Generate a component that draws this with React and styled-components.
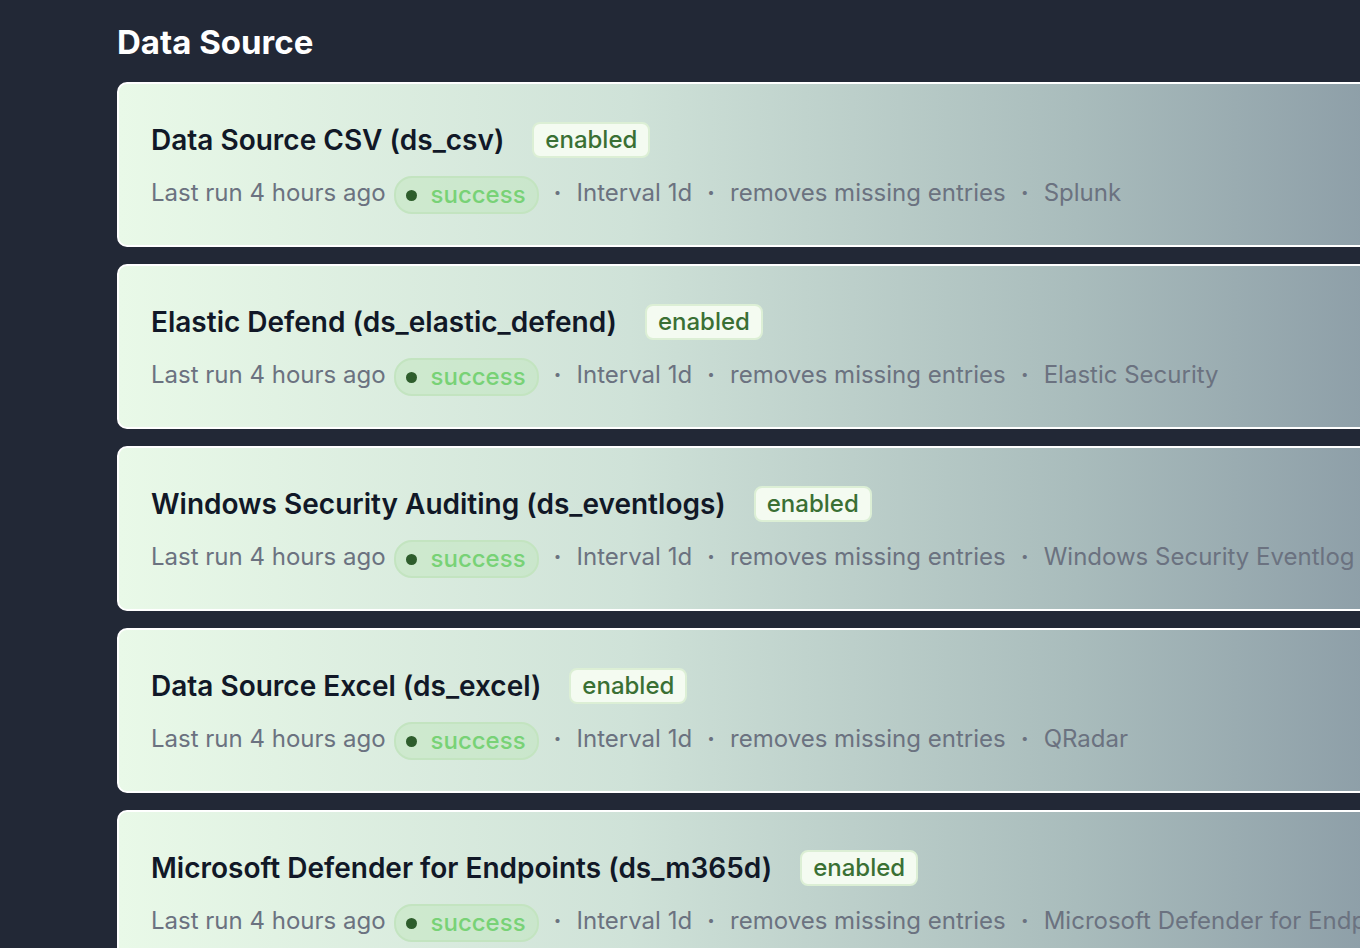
import React from "react";
import styled, { createGlobalStyle } from "styled-components";

const GlobalStyle = createGlobalStyle`
  html, body {
    margin: 0;
    padding: 0;
    background: #222836;
    overflow: hidden;
  }
  body {
    font-family: Inter, "Noto Sans", "Liberation Sans", sans-serif;
  }
`;

const sources = [
  { name: "Data Source CSV (ds_csv)", target: "Splunk" },
  { name: "Elastic Defend (ds_elastic_defend)", target: "Elastic Security" },
  { name: "Windows Security Auditing (ds_eventlogs)", target: "Windows Security Eventlog" },
  { name: "Data Source Excel (ds_excel)", target: "QRadar" },
  { name: "Microsoft Defender for Endpoints (ds_m365d)", target: "Microsoft Defender for Endpoints" },
];

export default function App() {
  return (
    <>
      <GlobalStyle />
      <Page>
        <Heading>Data Source</Heading>
        <List>
          {sources.map((s) => (
            <Card key={s.name}>
              <TitleRow>
                <Title>{s.name}</Title>
                <Enabled>enabled</Enabled>
              </TitleRow>
              <Meta>
                <span>Last run 4 hours ago</span>
                <Success>
                  <Dot />
                  success
                </Success>
                <Sep>·</Sep>
                <span>Interval 1d</span>
                <Sep>·</Sep>
                <span>removes missing entries</span>
                <Sep>·</Sep>
                <span>{s.target}</span>
              </Meta>
            </Card>
          ))}
        </List>
      </Page>
    </>
  );
}

const Page = styled.div`
  padding: 22px 0 0 117px;
  width: 1400px;
`;

const Heading = styled.h1`
  margin: 0 0 20px;
  color: #ffffff;
  font-size: 33px;
  font-weight: 700;
  line-height: 40px;
`;

const List = styled.div`
  display: flex;
  flex-direction: column;
  gap: 17px;
`;

const Card = styled.div`
  width: 1280px;
  box-sizing: border-box;
  height: 165px;
  padding: 38px 32px 0;
  border: 2px solid #ffffff;
  border-radius: 10px;
  background: linear-gradient(90deg, #e9f9e8 0%, #cfe2d8 40%, #a9bcbc 75%, #8b9ca6 100%);
  display: flex;
  flex-direction: column;
  gap: 13px;
`;

const TitleRow = styled.div`
  display: flex;
  align-items: center;
  gap: 28px;
`;

const Title = styled.div`
  color: #111827;
  font-size: 28px;
  font-weight: 600;
  line-height: 36px;
  white-space: nowrap;
`;

const Enabled = styled.span`
  color: #3a7034;
  background: #f4fbf1;
  border: 2px solid #dcefd5;
  border-radius: 8px;
  font-size: 24px;
  font-weight: 500;
  line-height: 32px;
  padding: 0 11px;
`;

const Meta = styled.div`
  display: flex;
  align-items: center;
  color: #6b7280;
  font-size: 24px;
  line-height: 36px;
  white-space: nowrap;
  & > span:first-child {
    margin-right: 8px;
  }
`;

const Success = styled.span`
  display: inline-flex;
  align-items: center;
  height: 34px;
  margin-top: 5px;
  padding: 0 11px 0 10px;
  border: 2px solid #c3e4c0;
  background: rgba(190, 230, 186, 0.45);
  border-radius: 18px;
  color: #78d276;
  font-size: 24px;
  font-weight: 500;
`;

const Dot = styled.i`
  width: 11px;
  height: 11px;
  border-radius: 50%;
  background: #2e5d2c;
  margin-right: 14px;
`;

const Sep = styled.span`
  padding: 0 15px;
  font-weight: 700;
`;
